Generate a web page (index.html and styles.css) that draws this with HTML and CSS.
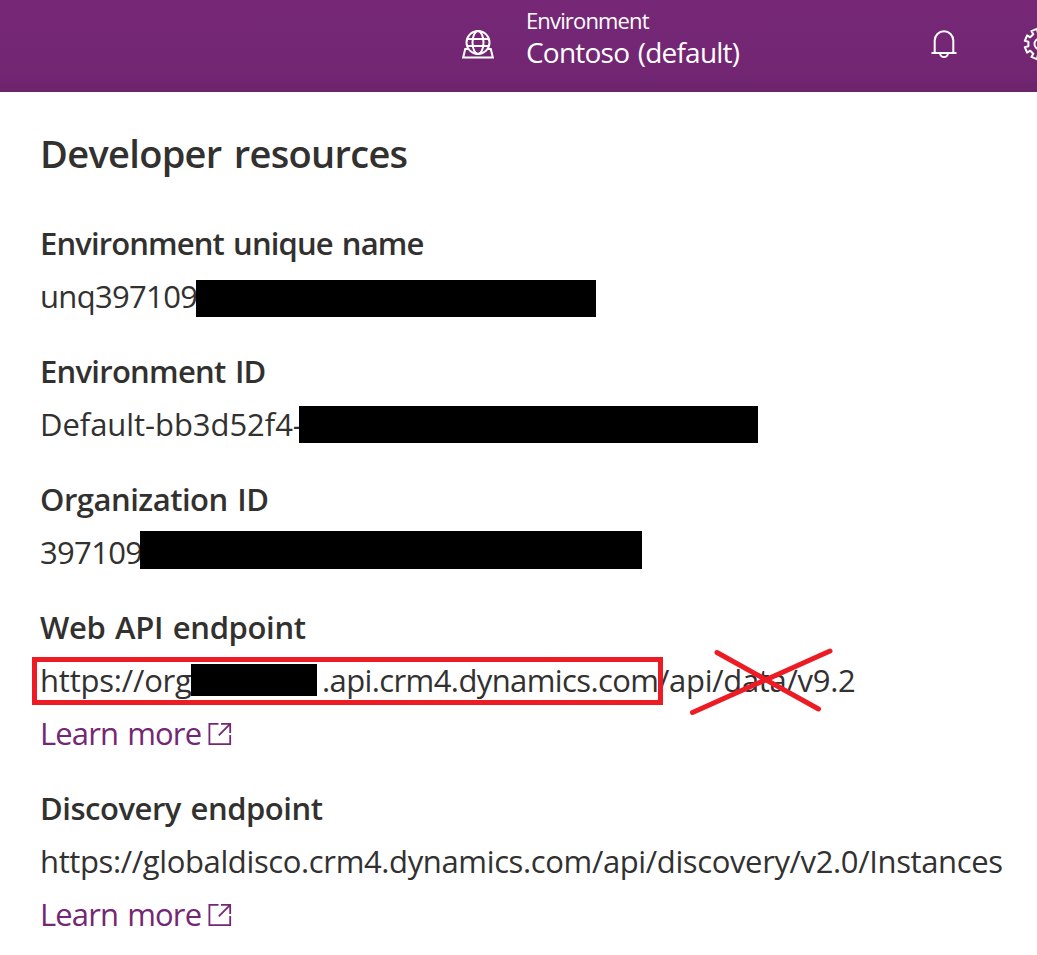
FILE: index.html
```
<!DOCTYPE html>
<html lang="en">
<head>
<meta charset="utf-8">
<title>Developer resources</title>
<link rel="stylesheet" href="styles.css">
</head>
<body>
<header class="topbar">
  <svg class="globe" width="34" height="30" viewBox="0 0 34 30" fill="none" stroke="#fff" stroke-width="2">
    <circle cx="17" cy="12.500" r="11.500"/>
    <ellipse cx="17" cy="12.500" rx="5.500" ry="11.500"/>
    <path d="M6.500 9h21M6.500 16h21"/>
    <path d="M7.500 19H4.200L2.200 27.500h29.600l-2-8.500h-3.300"/>
  </svg>
  <div class="env">
    <div class="env-label">Environment</div>
    <div class="env-name">Contoso (default)</div>
  </div>
  <svg class="bell" width="26" height="30" viewBox="0 0 26 30" fill="none" stroke="#fff" stroke-width="2">
    <path d="M3.700 24V11.500a9.300 9.300 0 0 1 18.600 0V24M.5 24h25M9.200 24.500a3.800 3.600 0 0 0 7.600 0"/>
  </svg>
  <svg class="gear" width="34" height="34" viewBox="-17 -17 34 34" fill="none" stroke="#fff" stroke-width="2" stroke-linejoin="round">
    <path d="M-2.200-11.600L-3.100-15.200L-8.600-12.900L-6.700-9.800L-9.800-6.700L-12.900-8.600L-15.200-3.100L-11.600-2.200V2.200L-15.200 3.100L-12.900 8.600L-9.800 6.700L-6.700 9.800L-8.600 12.900L-3.100 15.200L-2.200 11.600H2.200L3.100 15.200L8.600 12.900L6.700 9.800L9.800 6.700L12.900 8.600L15.200 3.100L11.600 2.200V-2.200L15.200-3.100L12.900-8.600L9.800-6.700L6.700-9.800L8.600-12.900L3.100-15.200L2.200-11.600Z"/>
    <circle r="5.500"/>
  </svg>
</header>
<main class="panel">
  <h1 class="title">Developer resources</h1>
  <section class="group">
    <h2 class="name name-unique">Environment unique name</h2>
    <div class="value"><span class="digits">unq397109</span><span class="redact redact-unique"></span></div>
  </section>
  <section class="group">
    <h2 class="name name-env">Environment ID</h2>
    <div class="value"><span class="default-id">Default-bb3d52f4-</span><span class="redact redact-env"></span></div>
  </section>
  <section class="group">
    <h2 class="name name-org">Organization ID</h2>
    <div class="value"><span class="digits">397109</span><span class="redact redact-org"></span></div>
  </section>
  <section class="group">
    <h2 class="name name-api">Web API endpoint</h2>
    <div class="value">
      <span class="url-start">https://org</span><span class="url-host">.api.crm4.dynamics.com</span><span class="url-path">/api/data/v9.2</span>
      <span class="redact redact-url"></span>
      <span class="highlight"></span>
      <svg class="cross" width="146" height="68" viewBox="0 0 146 68" stroke="#ed1c24" stroke-width="5" stroke-linecap="round"><path d="M29 4.500L130.500 61M4.500 64.500L142 3"/></svg>
    </div>
    <a class="more">Learn more<svg class="ext" width="24" height="24" viewBox="0 0 24 24" fill="none" stroke="#742774" stroke-width="1.800"><path d="M10.500 1.900H1.400V22.100H22.200V13M13 1.900H22.200V11M22.200 1.900L10.800 13.300"/></svg></a>
  </section>
  <section class="group">
    <h2 class="name name-disc">Discovery endpoint</h2>
    <div class="value"><span class="url-disc">https://globaldisco.crm4.dynamics.com/api/discovery/v2.0/Instances</span></div>
    <a class="more">Learn more<svg class="ext" width="24" height="24" viewBox="0 0 24 24" fill="none" stroke="#742774" stroke-width="1.800"><path d="M10.500 1.900H1.400V22.100H22.200V13M13 1.900H22.200V11M22.200 1.900L10.800 13.300"/></svg></a>
  </section>
</main>
</body>
</html>
```
FILE: styles.css
```
* { box-sizing: border-box; }
body {
  margin: 0;
  width: 1037px;
  height: 955px;
  overflow: hidden;
  background: #fff;
  color: #323130;
  font-family: "Open Sans", "Noto Sans", sans-serif;
}
.topbar {
  display: flex;
  height: 92px;
  padding-left: 461px;
  overflow: hidden;
  color: #fff;
  background: linear-gradient(#762876 0, #722672 75px, #6b246a 92px);
}
.topbar svg { flex: none; }
.globe { margin-top: 30px; }
.env { width: 405px; margin-left: 31px; padding-top: 6px; flex: none; white-space: nowrap; }
.env-label { font-size: 22px; line-height: 28px; letter-spacing: -0.85px; }
.env-name { font-size: 28px; line-height: 37px; letter-spacing: -0.78px; word-spacing: 2px; }
.bell { margin-top: 29px; }
.gear { margin: 27px 0 0 66px; }
.panel { padding: 31px 0 0 40px; }
.title {
  margin: 0 0 34px;
  font-size: 38px;
  line-height: 60px;
  font-weight: 550;
  letter-spacing: -0.68px;
  word-spacing: 3px;
}
.group { margin-bottom: 22px; }
.name {
  margin: 0;
  font-size: 31px;
  line-height: 53px;
  font-weight: 550;
  word-spacing: 2px;
  white-space: nowrap;
}
.name-unique { letter-spacing: -0.88px; }
.name-env { letter-spacing: -0.73px; }
.name-org { letter-spacing: -0.49px; }
.name-api { letter-spacing: -0.35px; }
.name-disc { letter-spacing: -0.47px; }
.value {
  position: relative;
  display: flex;
  height: 53px;
  font-size: 31px;
  line-height: 53px;
  white-space: nowrap;
}
.digits { letter-spacing: -0.68px; }
.default-id { letter-spacing: -0.05px; }
.url-start { width: 282px; letter-spacing: -0.2px; }
.url-host { width: 336px; letter-spacing: -0.6px; }
.url-path { letter-spacing: -0.3px; }
.url-disc { letter-spacing: -0.37px; }
.redact { position: absolute; background: #000; }
.redact-unique { left: 156px; top: 10px; width: 400px; height: 37px; }
.redact-env { left: 259px; top: 8px; width: 459px; height: 37px; }
.redact-org { left: 100px; top: 5px; width: 502px; height: 38px; }
.redact-url { left: 151px; top: 10px; width: 126px; height: 32px; }
.highlight {
  position: absolute;
  left: -8px;
  top: 3px;
  width: 631px;
  height: 48px;
  border: 5px solid #ed1c24;
}
.cross { position: absolute; left: 648px; top: -6px; }
.more {
  display: flex;
  align-items: center;
  gap: 7px;
  height: 53px;
  font-size: 31px;
  line-height: 53px;
  letter-spacing: -0.88px;
  word-spacing: 2px;
  color: #742774;
}
.ext { flex: none; }
```
